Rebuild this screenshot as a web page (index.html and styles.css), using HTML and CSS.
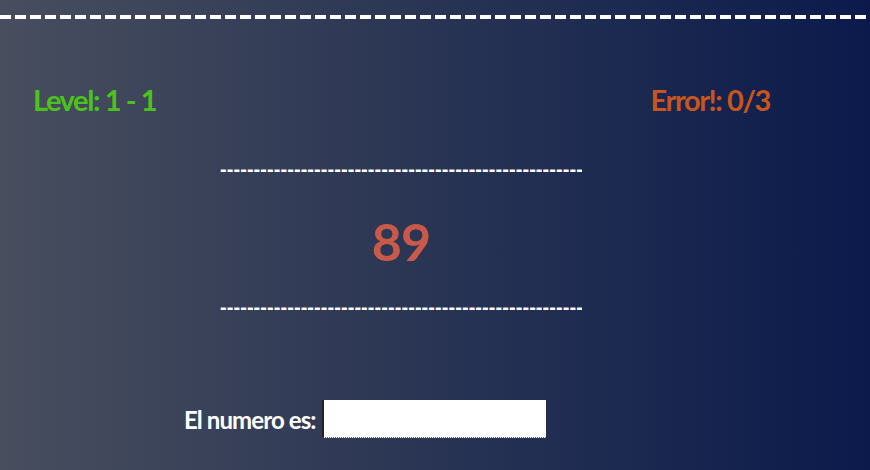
FILE: index.html
```html
<!DOCTYPE html>
<html lang="es">
<head>
<meta charset="utf-8">
<title>Juego de números</title>
<link rel="stylesheet" href="styles.css">
</head>
<body>
<div class="game">
  <div class="top-line"></div>
  <div class="status">
    <span class="level">Level: 1 - 1</span>
    <span class="errors">Error!: 0/3</span>
  </div>
  <div class="board">
    <div class="rule">------------------------------------------------------</div>
    <div class="number">89</div>
    <div class="rule">------------------------------------------------------</div>
  </div>
  <div class="answer">
    <label class="answer-label" for="num">El numero es:</label>
    <input class="answer-input" id="num" type="text">
  </div>
</div>
</body>
</html>
```

FILE: styles.css
```css
html, body {
  margin: 0;
  padding: 0;
  height: 100%;
}
body {
  background: linear-gradient(to right, #484e5e 0%, #2c3755 45%, #0b1a4b 100%);
  font-family: "Lato", "Open Sans", sans-serif;
  overflow: hidden;
}
.game {
  display: flex;
  flex-direction: column;
  padding-top: 15px;
}
.top-line {
  height: 4px;
  background: repeating-linear-gradient(to right, #ffffff 0 11px, transparent 11px 15px);
}
.status {
  display: flex;
  justify-content: space-between;
  padding: 63px 100px 0 33px;
  font-size: 29px;
  font-weight: 700;
  line-height: 36px;
  letter-spacing: -1.4px;
}
.level { color: #4cc31c; }
.errors { color: #c8561c; }
.board {
  display: flex;
  flex-direction: column;
  align-items: center;
  width: 362px;
  margin: 41px 0 0 220px;
}
.rule {
  color: #ffffff;
  font-family: "Liberation Sans", sans-serif;
  font-size: 20px;
  font-weight: 700;
  line-height: 20px;
  letter-spacing: 0.06px;
  white-space: nowrap;
  overflow: hidden;
  width: 362px;
}
.number {
  color: #c95a4a;
  font-size: 52px;
  font-weight: 700;
  line-height: 60px;
  letter-spacing: -1px;
  margin: 32px 0 26px;
}
.answer {
  display: flex;
  align-items: center;
  margin: 83px 0 0 184px;
  gap: 6px;
}
.answer-label {
  color: #ffffff;
  font-size: 24px;
  font-weight: 700;
  letter-spacing: -0.9px;
}
.answer-input {
  width: 224px;
  height: 38px;
  box-sizing: border-box;
  background: #ffffff;
  border: none;
  border-left: 2px solid #222222;
  border-bottom: 1px dotted #666666;
  padding: 0;
  margin: 0;
}
```
